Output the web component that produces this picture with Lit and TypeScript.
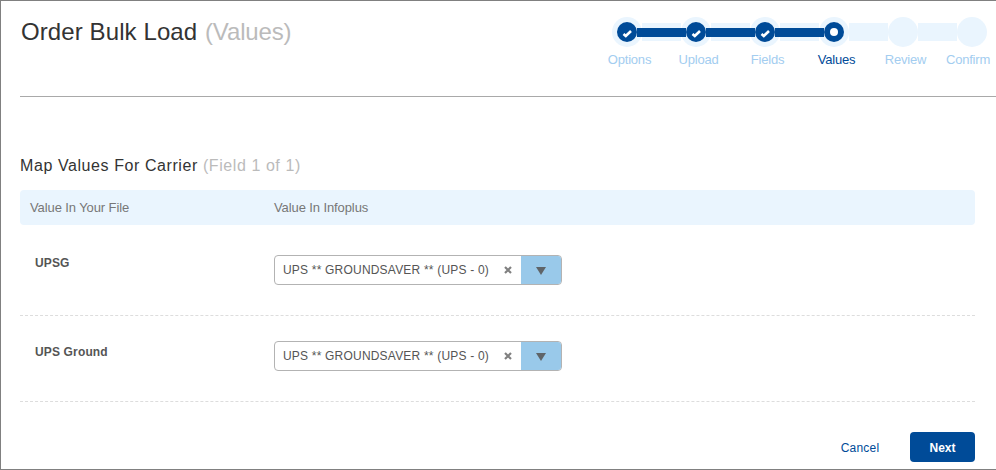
import { LitElement, html, css, svg } from 'lit';
import { customElement } from 'lit/decorators.js';
import { classMap } from 'lit/directives/class-map.js';

const STEPS = ['Options', 'Upload', 'Fields', 'Values', 'Review', 'Confirm'];
const CURRENT = 3;
const ROWS = ['UPSG', 'UPS Ground'];

const check = svg`<path d="M2.5 7 4.8 9 10 4" fill="none" stroke="#fff" stroke-width="2.6"/>`;

@customElement('app-root')
export class AppRoot extends LitElement {
  static styles = css`
    :host {
      display: block;
      font-family: 'Liberation Sans', Arial, sans-serif;
      color: #333;
    }

    .frame {
      box-sizing: border-box;
      width: 996px;
      height: 470px;
      border: 1px solid #808080;
      border-right: 0;
      background: #fff;
      padding-left: 19px;
      overflow: hidden;
    }

    .header {
      display: flex;
      justify-content: space-between;
      height: 95px;
      border-bottom: 1px solid #a9a9a9;
    }

    h1 {
      margin: 15px 0 0;
      padding-left: 1px;
      font-size: 24px;
      line-height: 32px;
      font-weight: 400;
      letter-spacing: 0.1px;
      color: #333;
    }

    h1 .muted {
      margin-left: 1px;
      letter-spacing: -0.15px;
    }

    .muted {
      color: #bbb;
    }

    .wizard {
      width: 384px;
      padding-top: 16px;
    }

    .track {
      display: flex;
      align-items: center;
    }

    .dot {
      flex: none;
      width: 30px;
      height: 30px;
      border-radius: 50%;
      background: #eaf5fe;
      display: flex;
      align-items: center;
      justify-content: center;
    }

    .inner {
      width: 20px;
      height: 20px;
      border-radius: 50%;
      background: #004b98;
      display: flex;
      align-items: center;
      justify-content: center;
    }

    .inner svg {
      width: 12px;
      height: 11px;
    }

    .pip {
      width: 8px;
      height: 8px;
      border-radius: 50%;
      background: #fff;
    }

    .link {
      flex: none;
      width: 39px;
      height: 18px;
      background: #eaf5fe;
      display: flex;
      align-items: center;
    }

    .bar {
      flex: none;
      width: 49px;
      height: 9px;
      margin-left: -5px;
      background: #004b98;
      position: relative;
    }

    .labels {
      display: grid;
      grid-template-columns: repeat(5, 69px) 56px;
      margin: 5px 0 0 -17px;
      font-size: 13px;
      line-height: 16px;
      letter-spacing: -0.2px;
      text-align: center;
      color: #a3cdf0;
    }

    .labels .on {
      color: #004b98;
    }

    .content {
      width: 955px;
    }

    h2 {
      margin: 59px 0 0;
      font-size: 16px;
      line-height: 20px;
      font-weight: 400;
      letter-spacing: 0.58px;
      color: #333;
    }

    .thead {
      display: grid;
      grid-template-columns: 244px 1fr;
      height: 35px;
      margin-top: 14px;
      padding-left: 10px;
      align-items: center;
      background: #eaf5fe;
      border-radius: 4px;
      font-size: 13px;
      letter-spacing: -0.1px;
      color: #777;
    }

    .row {
      display: grid;
      grid-template-columns: 239px 1fr;
      height: 86px;
      padding-left: 15px;
      box-sizing: border-box;
      border-bottom: 1px dashed #ddd;
    }

    .row.first {
      height: 91px;
      padding-top: 30px;
    }

    .row.next {
      padding-top: 25px;
    }

    .name {
      font-size: 12px;
      font-weight: 700;
      line-height: 14px;
      letter-spacing: 0.15px;
      color: #555;
    }

    .first .name {
      margin-top: 1px;
    }

    .next .name {
      margin-top: 4px;
    }

    .select {
      box-sizing: border-box;
      display: flex;
      width: 288px;
      height: 30px;
      border: 1px solid #b3b3b3;
      border-radius: 4px;
      overflow: hidden;
    }

    .value {
      flex: 1;
      padding-left: 8px;
      font-size: 12px;
      line-height: 28px;
      letter-spacing: 0.2px;
      color: #555;
      white-space: nowrap;
    }

    .clear {
      width: 8px;
      margin-right: 9px;
      display: flex;
      align-items: center;
    }

    .clear svg {
      width: 8px;
      height: 8px;
    }

    .arrow {
      width: 40px;
      background: #99c9ea;
      display: flex;
      align-items: center;
      justify-content: center;
    }

    .arrow i {
      width: 0;
      height: 0;
      margin-top: 2px;
      border-left: 5.5px solid transparent;
      border-right: 5.5px solid transparent;
      border-top: 8px solid #5f6468;
    }

    .actions {
      display: flex;
      justify-content: flex-end;
      align-items: center;
      margin-top: 30px;
    }

    button {
      font-family: inherit;
      font-size: 12px;
      border: 0;
      height: 30px;
      padding: 1px 0 0;
    }

    .cancel {
      background: none;
      color: #004b98;
      width: 40px;
      margin-right: 30px;
      letter-spacing: 0.2px;
    }

    .go {
      width: 65px;
      background: #004b98;
      border-radius: 4px;
      color: #fff;
      font-weight: 700;
    }
  `;

  render() {
    return html`
      <div class="frame">
        <div class="header">
          <h1>Order Bulk Load <span class="muted">(Values)</span></h1>
          <div class="wizard">
            <div class="track">
              ${STEPS.map((_, i) => html`
                <div class="dot">
                  ${i <= CURRENT ? html`
                    <div class="inner">
                      ${i < CURRENT
                        ? html`<svg viewBox="0 0 12 11">${check}</svg>`
                        : html`<div class="pip"></div>`}
                    </div>` : ''}
                </div>
                ${i < STEPS.length - 1 ? html`
                  <div class="link">
                    ${i < CURRENT ? html`<div class="bar"></div>` : ''}
                  </div>` : ''}
              `)}
            </div>
            <div class="labels">
              ${STEPS.map((s, i) => html`<div class=${classMap({ on: i === CURRENT })}>${s}</div>`)}
            </div>
          </div>
        </div>
        <div class="content">
          <h2>Map Values For Carrier <span class="muted">(Field 1 of 1)</span></h2>
          <div class="thead">
            <div>Value In Your File</div>
            <div>Value In Infoplus</div>
          </div>
          ${ROWS.map((name, i) => html`
            <div class="row ${i === 0 ? 'first' : 'next'}">
              <div class="name">${name}</div>
              <div class="select">
                <div class="value">UPS ** GROUNDSAVER ** (UPS - 0)</div>
                <div class="clear">
                  <svg viewBox="0 0 8 8"><path d="M1 1 7 7M7 1 1 7" stroke="#808080" stroke-width="2.2"/></svg>
                </div>
                <div class="arrow"><i></i></div>
              </div>
            </div>
          `)}
          <div class="actions">
            <button class="cancel">Cancel</button>
            <button class="go">Next</button>
          </div>
        </div>
      </div>
    `;
  }
}
